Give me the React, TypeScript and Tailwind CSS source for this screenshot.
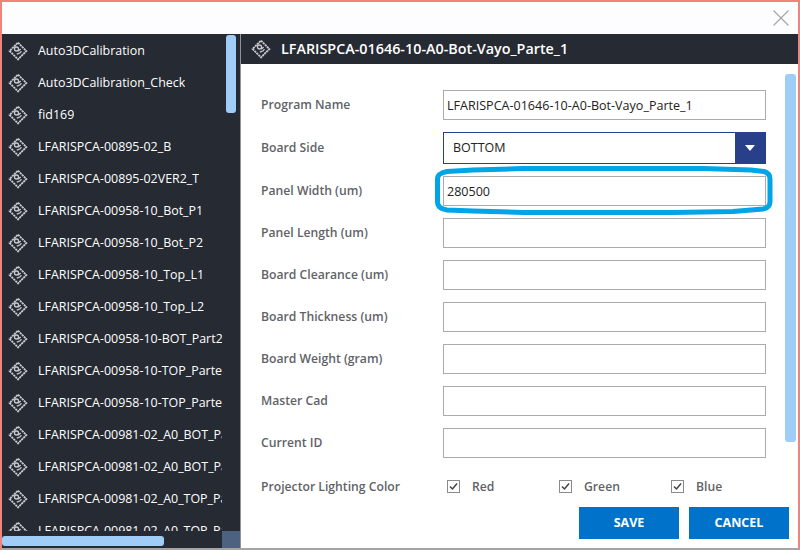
const programs = [
  'Auto3DCalibration',
  'Auto3DCalibration_Check',
  'fid169',
  'LFARISPCA-00895-02_B',
  'LFARISPCA-00895-02VER2_T',
  'LFARISPCA-00958-10_Bot_P1',
  'LFARISPCA-00958-10_Bot_P2',
  'LFARISPCA-00958-10_Top_L1',
  'LFARISPCA-00958-10_Top_L2',
  'LFARISPCA-00958-10-BOT_Part2',
  'LFARISPCA-00958-10-TOP_Parte1',
  'LFARISPCA-00958-10-TOP_Parte2',
  'LFARISPCA-00981-02_A0_BOT_Parte1',
  'LFARISPCA-00981-02_A0_BOT_Parte2',
  'LFARISPCA-00981-02_A0_TOP_Parte1',
  'LFARISPCA-00981-02_A0_TOP_Parte2',
]

const fields: [string, string][] = [
  ['Panel Length (um)', ''],
  ['Board Clearance (um)', ''],
  ['Board Thickness (um)', ''],
  ['Board Weight (gram)', ''],
  ['Master Cad', ''],
  ['Current ID', ''],
]

function BoardIcon() {
  return (
    <svg width="20" height="20" viewBox="0 0 20 20" fill="none" stroke="#c9cbce" className="shrink-0">
      <path d="M10 1.6 18.4 10 10 18.4 1.6 10Z" strokeWidth="1.8" strokeDasharray="2.2 0.6" />
      <circle cx="8.5" cy="8" r="2" strokeWidth="1.3" />
      <path d="M10.2 10.2 12.6 8M8.8 13.2l3.4-1.4 1.2-1.6" strokeWidth="1.3" />
    </svg>
  )
}

function Field({ label, value }: { label: string; value: string }) {
  return (
    <div className="flex h-[42px] items-center">
      <label className="w-[182px] shrink-0 text-[12.2px] font-semibold text-[#5f6368]">{label}</label>
      <input
        readOnly
        value={value}
        className="h-[30px] w-[323px] border border-[#ababab] bg-white px-[3px] text-[12.55px] text-[#222] outline-none"
      />
    </div>
  )
}

function Check({ label, width }: { label: string; width: string }) {
  return (
    <div className={`flex items-center gap-[12px] ${width}`}>
      <span className="flex h-[13px] w-[13px] items-center justify-center border border-[#8a8a8a]">
        <svg width="9" height="9" viewBox="0 0 9 9" fill="none" stroke="#444" strokeWidth="1.5">
          <path d="M1 4.5 3.5 7 8 1.5" />
        </svg>
      </span>
      <span className="text-[12.2px] font-semibold text-[#5f6368]">{label}</span>
    </div>
  )
}

export default function App() {
  return (
    <div className="relative flex h-[550px] w-[800px] flex-col overflow-hidden border-x-2 border-t-2 border-b-2 border-x-[#f0837b] border-t-[#f0837b] border-b-[#a9a4a4] bg-white font-['Open_Sans','Noto_Sans',sans-serif]">
      <div className="flex h-[32px] shrink-0 justify-end bg-[#fdfdff] pt-[8px] pr-[9px]">
        <svg width="16" height="16" viewBox="0 0 16 16" stroke="#a3a3a3" strokeWidth="1.1">
          <path d="M.5.5l15 15M15.5.5l-15 15" />
        </svg>
      </div>

      <div className="flex min-h-0 flex-1">
        <aside className="relative w-[239px] shrink-0 overflow-hidden border-r border-[#8f9298] bg-[#252a33]">
          <ul className="w-[220px] overflow-hidden pt-[1px]">
            {programs.map((name) => (
              <li key={name} className="flex h-[32px] items-center gap-[10px] pl-[6px]">
                <BoardIcon />
                <span className="overflow-hidden text-[12.45px] whitespace-nowrap text-white">{name}</span>
              </li>
            ))}
          </ul>
          <div className="absolute top-[1px] left-[224px] h-[78px] w-[10px] rounded-[3px] bg-[#a0cdf8]" />
          <div className="absolute right-0 bottom-0 left-0 h-[17px] bg-[#252a33]" />
          <div className="absolute bottom-[2px] left-0 h-[10px] w-[162px] rounded-[3px] bg-[#a0cdf8]" />
          <div className="absolute right-0 bottom-0 h-[17px] w-[18px] bg-[#4d6180]" />
        </aside>

        <main className="relative flex min-w-0 flex-1 flex-col">
          <header className="flex h-[30px] shrink-0 items-center gap-[10px] bg-[#252a33] pl-[10px]">
            <BoardIcon />
            <h1 className="text-[14.35px] font-semibold text-white">LFARISPCA-01646-10-A0-Bot-Vayo_Parte_1</h1>
          </header>

          <div className="flex-1 pt-[20px] pl-[20px]">
            <Field label="Program Name" value="LFARISPCA-01646-10-A0-Bot-Vayo_Parte_1" />
            <div className="mt-[1px] mb-[1px] flex h-[42px] items-center">
              <label className="w-[182px] shrink-0 text-[12.2px] font-semibold text-[#5f6368]">Board Side</label>
              <div className="flex h-[32px] w-[323px] items-center justify-between border border-[#283f8a] pl-[9px]">
                <span className="text-[12.5px] text-[#222]">BOTTOM</span>
                <span className="flex h-[32px] w-[30px] items-center justify-center bg-[#283f8a]">
                  <span className="h-0 w-0 border-x-[5px] border-t-[6px] border-x-transparent border-t-white" />
                </span>
              </div>
            </div>
            <Field label="Panel Width (um)" value="280500" />
            {fields.map(([label, value]) => (
              <Field key={label} label={label} value={value} />
            ))}
            <div className="mt-[1px] flex h-[44px] items-center">
              <label className="w-[186px] shrink-0 text-[12.2px] font-semibold text-[#5f6368]">Projector Lighting Color</label>
              <Check label="Red" width="w-[112px]" />
              <Check label="Green" width="w-[112px]" />
              <Check label="Blue" width="w-[80px]" />
            </div>
          </div>

          <div className="absolute top-[40px] right-[2px] h-[368px] w-[11px] rounded-[3px] bg-[#a0cdf8]" />

          <div className="absolute right-[9px] bottom-[9px] flex gap-[10px]">
            <button className="h-[32px] w-[100px] bg-[#0072c9] text-[12.5px] font-bold text-white">SAVE</button>
            <button className="h-[32px] w-[100px] bg-[#0072c9] text-[12.5px] font-bold text-white">CANCEL</button>
          </div>

          {/* hand-drawn highlight around the panel width field */}
          <svg className="pointer-events-none absolute top-[131px] left-[192px]" width="342" height="52" viewBox="0 0 342 52" fill="none">
            <path
              d="M14 6.5 40 5 90 3.5H270L318 5 331 6.5C336 8 337 11 337 14V37C337 41 335 43 330 44L300 46.5 240 47.5H90L40 46 14 45C7 44 4.5 41 4.5 37V14C4.5 10 7 8 14 6.5Z"
              stroke="#00a5e8"
              strokeWidth="5"
            />
          </svg>
        </main>
      </div>
    </div>
  )
}
